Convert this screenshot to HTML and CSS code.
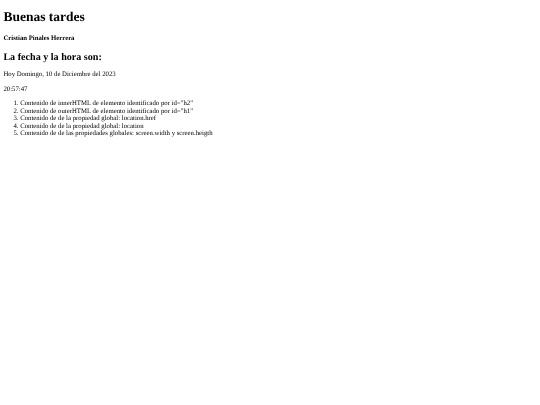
FILE: index.html
```html
<!DOCTYPE html>
<html lang="es">
<head>
    <meta charset="UTF-8">
    <title>Buenas tardes</title>
    <link rel="stylesheet" href="styles.css">
</head>
<body>
    <h1 id="h1">Buenas tardes</h1>
    <h4 class="author">Cristian Pinales Herrera</h4>
    <h2 id="h2">La fecha y la hora son:</h2>
    <p>Hoy Domingo, 10 de Diciembre del 2023</p>
    <p>20:57:47</p>
    <ol>
        <li>Contenido de innerHTML de elemento identificado por id="h2"</li>
        <li>Contenido de outerHTML de elemento identificado por id="h1"</li>
        <li>Contenido de de la propiedad global: location.href</li>
        <li>Contenido de de la propiedad global: location</li>
        <li>Contenido de de las propiedades globales: screen.width y screen.heigth</li>
    </ol>
</body>
</html>
```

FILE: styles.css
```css
html {
    background-color: white;
}
body {
    margin: 3.4px;
    font-family: "Liberation Serif", serif;
    font-size: 6.75px;
    line-height: 7.5px;
    text-rendering: geometricPrecision;
    color: black;
    filter: blur(0.2px);
}
h1 {
    font-size: 13.5px;
    line-height: 15.5px;
    margin: 5.6px 0 10.6px;
}
.author {
    font-size: 6.75px;
    line-height: 7.8px;
    margin: 10.6px 0 8.8px;
}
h2 {
    font-size: 10.1px;
    line-height: 11.6px;
    margin: 8.8px 0 7.6px;
}
p {
    margin: 7.6px 0 6.6px;
}
ol {
    margin: 0;
    padding-left: 16.8px;
}
```
